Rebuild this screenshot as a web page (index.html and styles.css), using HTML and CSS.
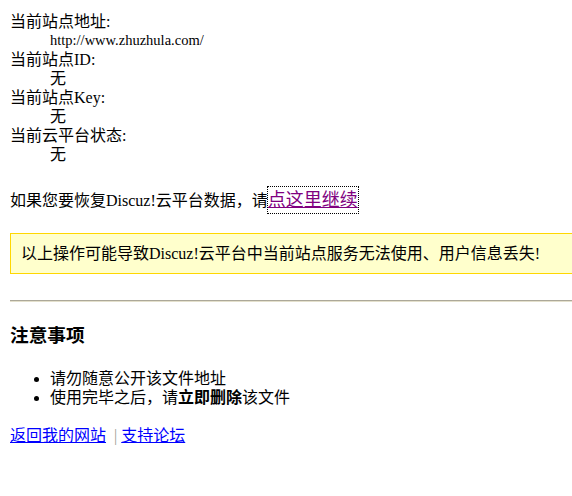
FILE: index.html
```html
<!DOCTYPE html>
<html lang="zh-CN">
<head>
    <meta charset="UTF-8">
    <title>Discuz! 云平台</title>
    <link rel="stylesheet" href="styles.css">
</head>
<body>
    <dl class="info">
        <dt>当前站点地址:</dt>
        <dd class="url">http://www.zhuzhula.com/</dd>
        <dt>当前站点ID:</dt>
        <dd>无</dd>
        <dt>当前站点Key:</dt>
        <dd>无</dd>
        <dt>当前云平台状态:</dt>
        <dd>无</dd>
    </dl>

    <p class="restore">如果您要恢复Discuz!云平台数据，请<a href="#" class="go">点这里继续</a></p>

    <div class="tips">以上操作可能导致Discuz!云平台中当前站点服务无法使用、用户信息丢失!</div>

    <hr>

    <h3>注意事项</h3>
    <ul>
        <li>请勿随意公开该文件地址</li>
        <li>使用完毕之后，请<b>立即删除</b>该文件</li>
    </ul>

    <p class="links"><a href="#">返回我的网站</a> <span class="sep">|</span> <a href="#">支持论坛</a></p>
</body>
</html>
```

FILE: styles.css
```css
html
{
    overflow-x: hidden;
}
body
{
    margin: 12px 0 0 10px;
    font-family: "Liberation Serif", "Noto Sans CJK SC", serif;
    font-size: 16px;
    line-height: 19px;
    color: #000;
    background: #fff;
}
a
{
    color: #0000ff;
}
.info
{
    margin: 0;
}
.info dd
{
    margin-left: 40px;
}
.info .url
{
    font-size: 14.5px;
}
.restore
{
    margin: 22px 0 18px 0;
    line-height: 28px;
}
.go
{
    color: #800080;
    font-size: 18px;
    outline: 1px dotted #000;
    padding: 3px 0;
}
.tips
{
    width: 100%;
    padding: 10px;
    background-color: #ffffcc;
    border: 1px solid #ffd700;
}
hr
{
    margin: 26px 0 0 0;
    border: none;
    border-top: 1px solid #aca899;
    border-bottom: 1px solid #e4e0cc;
}
h3
{
    margin: 23px 0 22px 0;
    font-size: 18.7px;
    line-height: 22px;
}
ul
{
    margin: 0;
    padding-left: 40px;
}
.links
{
    margin: 19px 0;
}
.sep
{
    color: #a0a090;
    margin: 0 0 0 4px;
}
```
